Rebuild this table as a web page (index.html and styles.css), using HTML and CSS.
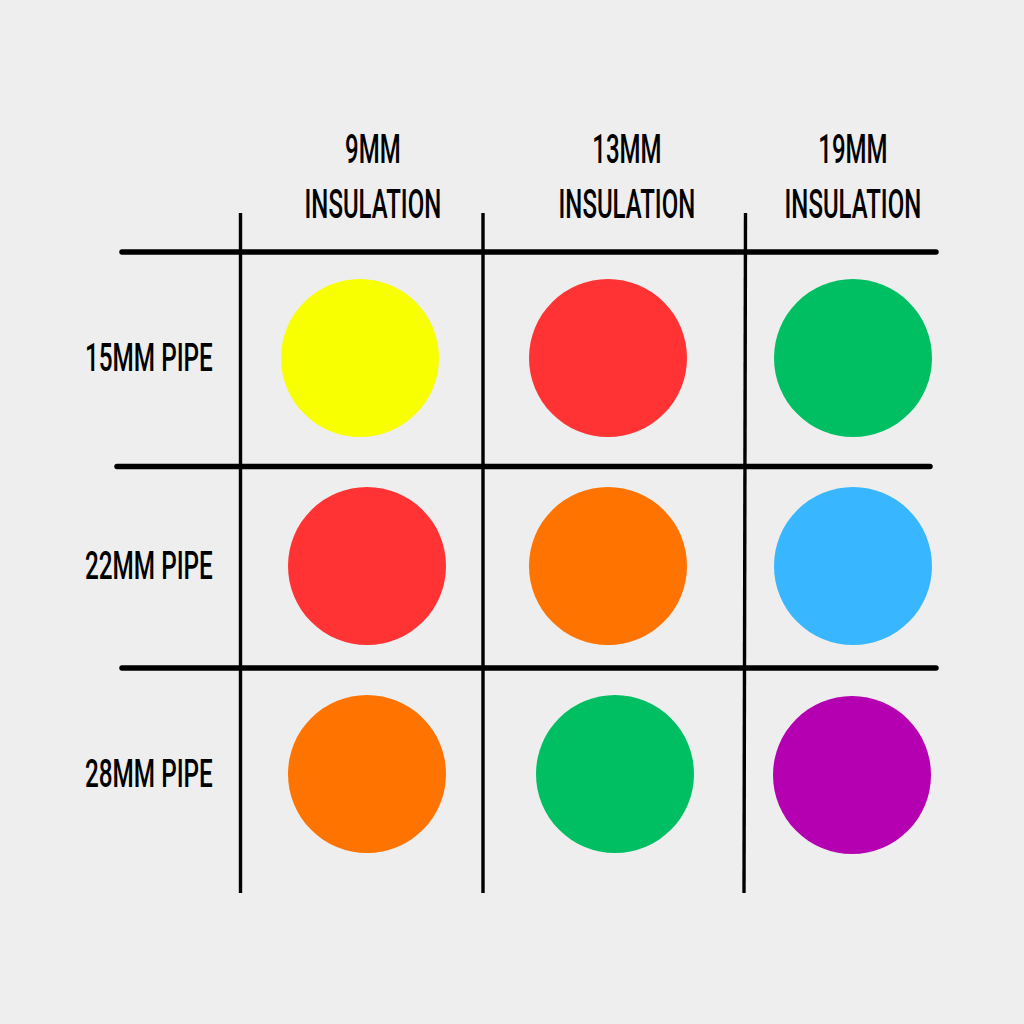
FILE: index.html
```html
<!DOCTYPE html>
<html lang="en">
<head>
<meta charset="utf-8">
<title>Pipe insulation colour chart</title>
<link rel="stylesheet" href="styles.css">
</head>
<body>
<main class="chart">
  <div class="grid">
    <div class="corner"></div>
    <div class="head head-1"><span class="head-text">9MM<br>INSULATION</span></div>
    <div class="head head-2"><span class="head-text">13MM<br>INSULATION</span></div>
    <div class="head head-3"><span class="head-text">19MM<br>INSULATION</span></div>

    <div class="label"><span class="label-text">15MM PIPE</span></div>
    <div class="cell shift-l2"><span class="dot yellow"></span></div>
    <div class="cell shift-l6"><span class="dot red"></span></div>
    <div class="cell"><span class="dot green"></span></div>

    <div class="label"><span class="label-text">22MM PIPE</span></div>
    <div class="cell shift-r6"><span class="dot red"></span></div>
    <div class="cell shift-l6"><span class="dot orange"></span></div>
    <div class="cell"><span class="dot blue"></span></div>

    <div class="label"><span class="label-text">28MM PIPE</span></div>
    <div class="cell shift-r6"><span class="dot orange"></span></div>
    <div class="cell shift-r1"><span class="dot green"></span></div>
    <div class="cell shift-l2 drop-1"><span class="dot purple"></span></div>
  </div>

  <svg class="lines" width="1024" height="1024" viewBox="0 0 1024 1024" aria-hidden="true">
    <g stroke="#000" fill="none" stroke-linecap="round">
      <line x1="240.5" y1="213" x2="240.5" y2="893" stroke-width="3.4" stroke-linecap="butt"/>
      <line x1="483" y1="213" x2="483" y2="893" stroke-width="3.4" stroke-linecap="butt"/>
      <line x1="745.5" y1="213" x2="744" y2="893" stroke-width="3.4" stroke-linecap="butt"/>
      <line x1="122" y1="252" x2="936" y2="252" stroke-width="5.5"/>
      <line x1="117" y1="466.5" x2="930" y2="466.5" stroke-width="5.5"/>
      <line x1="122" y1="668" x2="936" y2="668" stroke-width="5.5"/>
    </g>
  </svg>
</main>
</body>
</html>
```

FILE: styles.css
```css
html, body {
  margin: 0;
  padding: 0;
  background: #eeeeee;
}

.chart {
  position: relative;
  width: 1024px;
  height: 1024px;
  font-family: Roboto, "DejaVu Sans Condensed", sans-serif;
  color: #000;
}

.grid {
  display: grid;
  grid-template-columns: 240px 243px 262px 216px;
  grid-template-rows: 254px 208px 208px 208px;
}

.head {
  display: flex;
  justify-content: center;
  padding-top: 122px;
  box-sizing: border-box;
}

.head-1 { padding-left: 22px; }
.head-2 { padding-left: 26px; }
.head-3 { padding-left: 0; }

.head-text {
  display: inline-block;
  font-size: 40px;
  font-weight: 500;
  line-height: 55px;
  text-align: center;
  transform: scaleX(0.6);
  transform-origin: center top;
  white-space: nowrap;
}

.label {
  display: flex;
  align-items: center;
  justify-content: flex-end;
  padding-right: 27px;
}

.label-text {
  display: inline-block;
  font-size: 38px;
  font-weight: 500;
  line-height: 1;
  transform: scaleX(0.64);
  transform-origin: right center;
  white-space: nowrap;
}

.cell {
  display: flex;
  align-items: center;
  justify-content: center;
}

.shift-l2 { padding-right: 3px; }
.shift-l6 { padding-right: 12px; }
.shift-r6 { padding-left: 11px; }
.shift-r1 { padding-left: 2px; }
.drop-1 { padding-top: 2px; }

.dot {
  display: block;
  width: 158px;
  height: 158px;
  border-radius: 50%;
}

.yellow { background: #f8ff00; }
.red { background: #ff3333; }
.green { background: #00bf63; }
.orange { background: #ff7300; }
.blue { background: #38b6ff; }
.purple { background: #b500b2; }

.lines {
  position: absolute;
  top: 0;
  left: 0;
  pointer-events: none;
}
```
